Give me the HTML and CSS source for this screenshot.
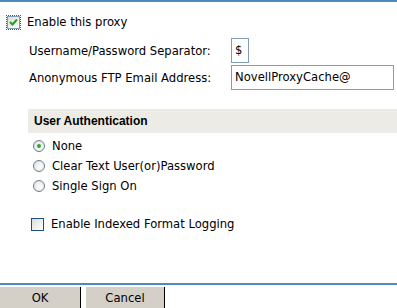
FILE: index.html
```html
<!DOCTYPE html>
<html lang="en">
<head>
    <meta charset="UTF-8">
    <title>Proxy Settings</title>
    <link rel="stylesheet" href="styles.css">
</head>
<body>
    <div class="page">
        <div class="content">
            <label class="check-row enable">
                <span class="box focused">
                    <svg width="9" height="8" viewBox="0 0 9 8"><path d="M1 4 L3.5 6.5 L8 1.5" fill="none" stroke="#21a121" stroke-width="2"/></svg>
                </span>
                Enable this proxy
            </label>

            <div class="fields">
                <span class="field-label">Username/Password Separator:</span>
                <span class="text-box small">$</span>
                <span class="field-label">Anonymous FTP Email Address:</span>
                <span class="text-box wide">NovellProxyCache@</span>
            </div>

            <div class="section-head">User Authentication</div>
            <div class="radios">
                <label class="radio-row"><span class="radio checked"><span class="dot"></span></span>None</label>
                <label class="radio-row"><span class="radio"></span>Clear Text User(or)Password</label>
                <label class="radio-row"><span class="radio"></span>Single Sign On</label>
            </div>

            <label class="check-row logging">
                <span class="box"></span>
                Enable Indexed Format Logging
            </label>
        </div>

        <div class="footer">
            <button class="btn ok">OK</button>
            <button class="btn cancel">Cancel</button>
        </div>
    </div>
</body>
</html>
```

FILE: styles.css
```css
body {
    margin: 0;
    font-family: 'DejaVu Sans', Verdana, sans-serif;
    font-size: 11.6px;
    color: #000;
    background: #fff;
}

.page {
    width: 397px;
    height: 308px;
    border-top: 2px solid #4a8cc0;
    box-sizing: border-box;
    display: flex;
    flex-direction: column;
}

.content {
    flex: 1;
    padding-top: 13px;
}

.check-row {
    display: flex;
    align-items: center;
    gap: 7px;
    height: 14px;
}

.enable {
    padding-left: 7px;
}

.box {
    width: 11px;
    height: 11px;
    border: 1px solid #1c5180;
    background: linear-gradient(135deg, #dcdcd7, #fff);
    display: flex;
    align-items: center;
    justify-content: center;
}

.box.focused {
    outline: 1px dotted #555;
    outline-offset: 0;
    border-color: #7f9db9;
}

.fields {
    display: grid;
    grid-template-columns: 202px auto;
    row-gap: 2px;
    align-items: center;
    padding-left: 29px;
    margin-top: 9px;
}

.text-box {
    height: 23px;
    border: 1px solid #7f9db9;
    padding: 0 3px;
    line-height: 23px;
    box-sizing: content-box;
}

.text-box.small {
    width: 10px;
}

.text-box.wide {
    width: 155px;
}

.section-head {
    margin: 19px 0 0 28px;
    height: 24px;
    line-height: 24px;
    padding-left: 6px;
    background: #edebe6;
    font-family: 'Liberation Sans', Arial, sans-serif;
    font-size: 12px;
    font-weight: bold;
}

.radios {
    padding-left: 33px;
    margin-top: 3px;
}

.radio-row {
    display: flex;
    align-items: center;
    gap: 7px;
    height: 20px;
}

.radio {
    width: 10px;
    height: 10px;
    border: 1px solid #6a7f95;
    border-radius: 50%;
    background: radial-gradient(circle at 60% 60%, #fff, #dcdcd5);
    display: flex;
    align-items: center;
    justify-content: center;
}

.dot {
    width: 4px;
    height: 4px;
    border-radius: 50%;
    background: #2aa82a;
}

.logging {
    padding-left: 31px;
    margin-top: 21px;
}

.footer {
    border-top: 2px solid #4a8cc0;
    padding-top: 2px;
    display: flex;
    gap: 5px;
    height: 21px;
}

.btn {
    height: 21px;
    background: #d4d0c8;
    border: none;
    border-right: 1px solid #000;
    font-family: 'DejaVu Sans', Verdana, sans-serif;
    font-size: 11.6px;
    color: #000;
    padding: 0;
}

.ok {
    width: 81px;
}

.cancel {
    width: 79px;
}
```
